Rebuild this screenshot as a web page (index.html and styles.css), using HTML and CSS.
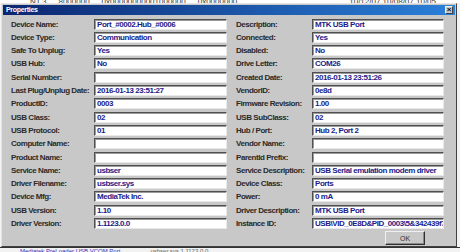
FILE: index.html
```html
<!DOCTYPE html>
<html lang="en">

<head>
  <meta charset="UTF-8" />
  <meta name="viewport" content="width=device-width, initial-scale=1.0" />
  <link rel="stylesheet" href="styles.css">
  <title>Properties</title>
</head>

<body>
  <div class="behind-top">
    <span>NT.3</span><span>8000000</span><span>0x00000000001000000</span><span>0x0000000</span>
    <span class="date">10/12/07 10/08/07 10/05</span>
  </div>

  <div class="dialog">
    <div class="title-bar">
      <span class="title">Properties</span>
      <button class="close">&#215;</button>
    </div>

    <div class="props">
      <label>Device Name:</label><div class="field">Port_#0002.Hub_#0006</div>
      <label>Description:</label><div class="field">MTK USB Port</div>

      <label>Device Type:</label><div class="field">Communication</div>
      <label>Connected:</label><div class="field">Yes</div>

      <label>Safe To Unplug:</label><div class="field">Yes</div>
      <label>Disabled:</label><div class="field">No</div>

      <label>USB Hub:</label><div class="field">No</div>
      <label>Drive Letter:</label><div class="field">COM26</div>

      <label>Serial Number:</label><div class="field"></div>
      <label>Created Date:</label><div class="field">2016-01-13 23:51:26</div>

      <label>Last Plug/Unplug Date:</label><div class="field">2016-01-13 23:51:27</div>
      <label>VendorID:</label><div class="field">0e8d</div>

      <label>ProductID:</label><div class="field">0003</div>
      <label>Firmware Revision:</label><div class="field">1.00</div>

      <label>USB Class:</label><div class="field">02</div>
      <label>USB SubClass:</label><div class="field">02</div>

      <label>USB Protocol:</label><div class="field">01</div>
      <label>Hub / Port:</label><div class="field">Hub 2, Port 2</div>

      <label>Computer Name:</label><div class="field"></div>
      <label>Vendor Name:</label><div class="field"></div>

      <label>Product Name:</label><div class="field"></div>
      <label>ParentId Prefix:</label><div class="field"></div>

      <label>Service Name:</label><div class="field">usbser</div>
      <label>Service Description:</label><div class="field">USB Serial emulation modem driver</div>

      <label>Driver Filename:</label><div class="field">usbser.sys</div>
      <label>Device Class:</label><div class="field">Ports</div>

      <label>Device Mfg:</label><div class="field">MediaTek Inc.</div>
      <label>Power:</label><div class="field">0 mA</div>

      <label>USB Version:</label><div class="field">1.10</div>
      <label>Driver Description:</label><div class="field">MTK USB Port</div>

      <label>Driver Version:</label><div class="field">1.1123.0.0</div>
      <label>Instance ID:</label><div class="field">USB\VID_0E8D&amp;PID_0003\5&amp;342439f7&amp;0&amp;2</div>
    </div>

    <div class="footer">
      <button class="ok">OK</button>
    </div>
  </div>

  <div class="behind-bottom">
    <span>Mediatek PreLoader USB VCOM Port</span><span class="muted">usbser.sys 1.1123.0.0</span>
  </div>
</body>

</html>
```

FILE: styles.css
```css
*,
*::after,
*::before {
  box-sizing: border-box;
  font-family: "Liberation Sans", Arial, sans-serif;
}

body {
  margin: 0;
  width: 460px;
  height: 252px;
  overflow: hidden;
  background-color: #f2f2f2;
}

.behind-top {
  height: 3px;
  overflow: hidden;
  display: flex;
  gap: 12px;
  padding-left: 30px;
  padding-right: 24px;
  font-size: 8px;
  line-height: 3px;
  color: #333;
  background-color: #fff;
}

.behind-top .date {
  margin-left: auto;
}

.dialog {
  width: 456px;
  height: 244px;
  margin-left: 1px;
  padding: 1px;
  display: flex;
  flex-direction: column;
  background-color: #c8c8c8;
  border: 1px solid;
  border-color: #e4e4e4 #404040 #404040 #e4e4e4;
}

.title-bar {
  height: 10px;
  display: flex;
  align-items: center;
  justify-content: space-between;
  padding: 0 2px 0 3px;
  background: linear-gradient(to right, #0b2670, #2a80da);
}

.title {
  color: white;
  font-size: 7px;
  font-weight: bold;
  letter-spacing: -0.3px;
}

.close {
  width: 8px;
  height: 8px;
  padding: 0;
  display: flex;
  align-items: center;
  justify-content: center;
  font-size: 8px;
  font-weight: bold;
  line-height: 1;
  color: #111;
  background-color: #c8c8c8;
  border: 1px solid;
  border-color: #f0f0f0 #404040 #404040 #f0f0f0;
}

.props {
  display: grid;
  grid-template-columns: 85px 133px 85px 132px;
  grid-auto-rows: 11px;
  row-gap: 2.3px;
  padding: 4px 0 0 6px;
}

.props label:nth-child(4n+3) {
  margin-left: 7px;
}

.props label {
  display: flex;
  align-items: center;
  padding-left: 2px;
  font-size: 8px;
  font-weight: bold;
  letter-spacing: -0.45px;
  color: #2a2a2a;
  white-space: nowrap;
}

.props .field {
  display: flex;
  align-items: center;
  padding-left: 2px;
  overflow: hidden;
  white-space: nowrap;
  font-size: 8px;
  font-weight: bold;
  letter-spacing: -0.45px;
  color: #1c1c8a;
  background-color: #fff;
  border: 1px solid;
  border-color: #505050 #e8e8e8 #e8e8e8 #505050;
  box-shadow: inset 1px 1px 0 #9a9a9a;
}

.footer {
  display: flex;
  justify-content: flex-end;
  padding: 2px 30px 0 0;
}

.ok {
  width: 40px;
  height: 14px;
  padding: 0;
  font-size: 7px;
  color: #333;
  background-color: #c8c8c8;
  border: 1px solid;
  border-color: #f0f0f0 #303030 #303030 #f0f0f0;
  box-shadow: inset -1px -1px 0 #8a8a8a;
}

.behind-bottom {
  display: flex;
  gap: 30px;
  padding-left: 20px;
  font-size: 6px;
  line-height: 6px;
  color: #3030c0;
  border-top: 1px solid #333;
}

.behind-bottom .muted {
  color: #666;
}
```
